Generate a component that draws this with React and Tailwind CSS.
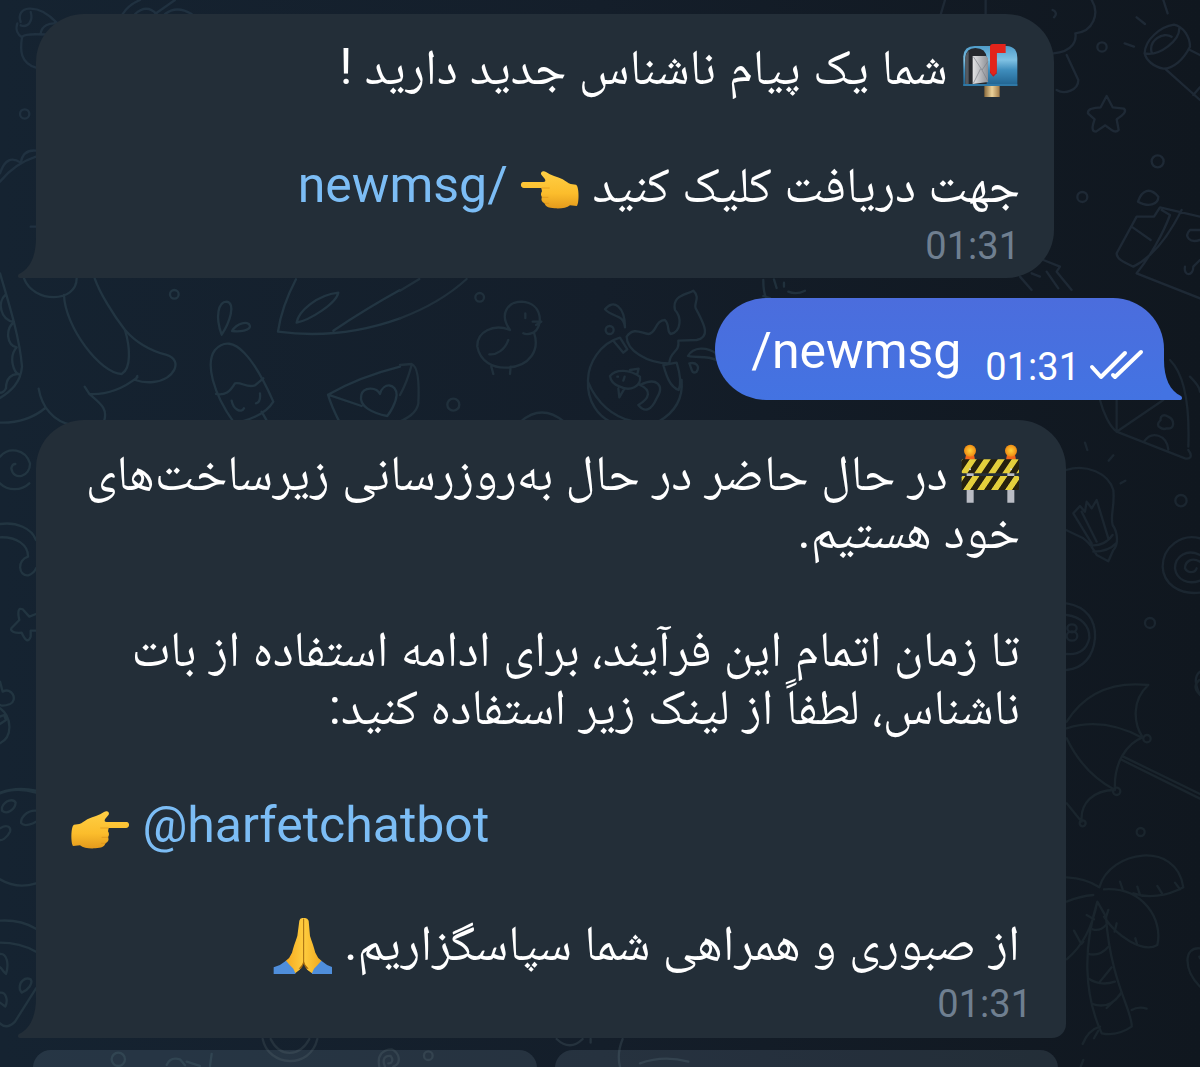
/**
 * Chat conversation view
 * Bot messages on the left, own command on the right
 */

import { clsx } from "clsx";

// Doodles drawn behind the messages, grouped by area of the wallpaper
const doodles = [
  {
    at: "translate(0 0)",
    tone: "stroke-[#203140]",
    paths: [
      "M62 66C45 20 110 5 170 68M52 70C45 90 55 105 66 112M66 112C60 150 60 190 110 204M66 112C70 98 130 104 150 104M62 76C85 85 100 60 92 36M122 100C125 80 145 65 178 72",
      "M368 42Q385 15 420 0M405 42Q440 10 470 42M465 42L525 0M495 42Q530 15 575 42",
      "M0 545Q45 490 108 470M0 520Q20 460 62 488M62 488Q70 448 108 452M92 680H108",
      "M60 342A14 14 0 1 0 88 342A14 14 0 1 0 60 342",
    ],
  },
  {
    at: "translate(0 240)",
    tone: "stroke-[#223542]",
    paths: [
      "M0 100C30 200 60 300 66 380C62 430 30 455 0 474M16 165C-8 185 0 240 42 246C15 268 20 315 50 322C25 350 40 398 58 403C35 400 18 415 18 445C10 460 0 458 0 458",
      "M72 115C100 190 230 190 230 115M192 165C195 260 300 400 365 402C395 385 390 320 375 270C340 225 300 160 284 115",
      "M375 270C410 310 450 332 500 345C550 360 525 420 460 426C440 428 420 425 406 420L412 408M412 412C370 445 325 465 268 462L254 440M268 462C300 490 325 505 312 545M116 446C125 500 160 545 215 555M0 548Q80 550 136 504",
      "M510 163A13 13 0 1 0 536 163A13 13 0 1 0 510 163",
      "M665 284C645 230 655 185 680 185C708 190 690 245 665 284ZM696 273C710 250 745 240 750 258C750 272 720 276 696 273Z",
      "M700 545C640 460 615 370 645 330C700 270 765 360 820 485C800 520 760 535 725 545M648 462C675 468 690 455 705 430C725 425 740 445 765 436L790 415M695 482C700 510 725 520 732 505M780 460C782 480 778 488 768 490M785 515L802 545",
      "M888 118Q845 200 834 275Q1020 300 1200 235M1000 272Q1100 205 1200 150M890 248C895 215 950 165 1015 158C1010 190 930 240 890 248Z",
      "M1200 380Q1080 410 984 464Q995 500 1018 545M984 464L1085 498M1162 528C1120 520 1075 500 1084 465C1090 440 1130 440 1140 462C1150 425 1190 430 1190 465C1188 490 1170 518 1162 528Z",
    ],
  },
  {
    at: "translate(400 270)",
    tone: "stroke-[#20303c]",
    paths: [
      "M0 62L58 27M0 145Q120 100 200 27M226 82A13 13 0 1 0 252 82A13 13 0 1 0 226 82M142 404A18 18 0 1 0 178 404A18 18 0 1 0 142 404",
      "M330 180C295 130 325 95 366 95C430 100 430 170 400 188C385 194 378 194 370 190M330 180C280 160 230 185 232 230C240 275 280 295 320 293C390 290 420 240 402 188M325 210C315 240 290 255 268 253M274 290L280 312M332 290L330 312M376 130V144M398 155L424 155L408 165",
      "M0 285L35 282C55 290 58 340 55 400C50 430 20 445 0 455M35 285Q20 340 0 375",
      "M362 455Q425 400 492 455M564 330C565 280 600 220 660 203L682 238L670 248L640 212M564 335C590 400 640 440 695 453M564 330C560 400 600 440 630 455M845 330C850 390 820 430 775 455M790 285L830 278C840 310 845 340 836 360C810 350 800 320 790 285",
      "M680 200C700 170 725 190 745 192C770 190 765 150 795 150C810 165 800 185 812 192C845 185 845 140 825 120C815 75 860 75 880 62C905 85 875 105 890 120C910 160 935 200 890 210L835 212C840 250 810 240 808 280C740 280 680 240 680 200Z",
      "M615 118C640 85 675 110 675 172C670 130 640 145 615 118ZM617 180A12 12 0 1 0 641 180A12 12 0 1 0 617 180",
      "M630 318C650 295 690 300 720 320C725 350 690 365 660 350C645 345 632 335 630 318M655 355L658 382L672 358M690 300L716 296L712 312M720 345C770 320 795 345 770 385C755 420 735 430 715 405C750 385 755 360 720 345M652 320H654M674 320L670 332",
      "M864 258C880 230 920 230 948 250V270C920 255 890 265 864 258ZM868 280C890 275 900 290 890 305C875 315 875 295 868 280ZM1090 30Q1090 70 1100 86M1090 78L1110 84M1122 28L1130 54M1152 38V50M1165 65Q1190 75 1215 62",
    ],
  },
  {
    at: "translate(900 0)",
    tone: "stroke-[#1e2935]",
    paths: [
      "M122 44L135 0M257 44V0M460 160C520 155 530 120 526 100C580 95 600 40 575 0M500 165L535 240C535 270 495 285 470 270M458 30C470 35 470 45 462 52",
      "M592 141A14 14 0 1 0 620 141A14 14 0 1 0 592 141M755 484A18 18 0 1 0 791 484A18 18 0 1 0 755 484M532 591A15 15 0 1 0 562 591A15 15 0 1 0 532 591",
      "M620 288L638 322L672 326C682 335 668 345 650 358L656 390C645 402 632 388 616 376L588 395C574 395 576 380 584 358L564 340C562 325 580 325 602 322Z",
      "M734 160C735 120 780 80 822 74C850 80 870 110 870 140C850 180 820 205 790 206C760 200 738 180 734 160ZM734 160C780 170 840 120 838 84M755 158C745 120 790 95 815 110M870 150L900 165M795 206L900 300M880 285L900 262M710 52L735 72M790 0L803 40M674 130L702 140",
      "M714 605C725 570 750 560 775 590C775 610 750 625 714 605ZM762 650L780 622L900 650M762 650H710L650 760C650 780 680 790 700 800M700 800C740 780 790 740 845 630M695 680L752 720M785 630L810 645C790 700 750 770 710 820L900 895M900 690H870C850 710 870 730 900 720M855 800C850 830 880 830 880 800L900 780",
      "M360 830L395 870M430 780L480 800L470 815L515 870M395 820L420 830M440 815L475 865",
    ],
  },
  {
    at: "translate(900 420)",
    tone: "stroke-[#1b2630]",
    paths: [
      "M870 -130Q900 -100 900 -85M600 -60C610 -20 630 20 650 35L855 115C870 118 880 110 865 90M650 35L790 -60M650 35V-70M732 65C755 30 800 45 805 88M782 0C760 20 790 30 800 25C825 30 825 0 805 -10C790 -20 780 -10 782 0M810 -180C850 -140 870 -60 865 80",
      "M498 150C560 130 625 160 640 210C645 260 630 285 638 315C655 340 655 375 640 390L625 424L590 405C575 380 570 370 550 355L498 330M570 375C600 380 625 365 638 345M580 395C610 395 635 385 648 370M575 370L520 280L540 258L555 275L560 245L575 265L590 240L625 355M545 275L590 365",
      "M555 68L562 90M640 106L626 122M676 182L662 190M826 242A17 17 0 1 0 860 242A17 17 0 1 0 826 242M735 609A15 15 0 1 0 765 609A15 15 0 1 0 735 609",
      "M900 355C845 340 788 380 788 440C790 490 835 525 900 518M900 405C860 385 825 410 825 445C830 480 865 495 900 482M900 425C875 410 855 425 855 445C862 460 885 460 890 445",
      "M500 550C560 560 588 600 585 655C580 710 550 745 500 750M500 585C545 590 570 620 568 655C560 690 535 705 500 702M502 625A14 12 0 1 0 530 625A14 12 0 1 0 502 625M500 648A16 14 0 1 0 532 648A16 14 0 1 0 500 648M900 755Q875 775 900 825",
    ],
  },
  {
    at: "translate(1000 680)",
    tone: "stroke-[#1a252d]",
    paths: [
      "M200 125C260 30 350 5 445 15C395 60 400 130 428 172C380 190 340 250 345 330C280 330 240 370 245 425L200 370M200 145Q310 110 428 174M200 175Q250 280 345 330M370 230L600 342M362 238L600 356",
      "M430 176A11 11 0 1 0 452 176A11 11 0 1 0 430 176M339 334A11 11 0 1 0 361 334A11 11 0 1 0 339 334M239 430A9 9 0 1 0 257 430A9 9 0 1 0 239 430M410 456A12 12 0 1 0 434 456A12 12 0 1 0 410 456M598 0Q575 20 598 42",
      "M200 592Q260 595 298 622C330 510 530 480 550 622C500 650 440 655 400 640M312 628C430 620 490 720 472 795C430 820 350 770 312 710M200 665Q240 648 280 645M200 838Q270 780 292 665M292 665C250 800 250 940 305 1060Q350 1070 395 1040C400 1000 330 900 318 710L292 665",
      "M278 748Q300 755 318 735M264 822Q300 830 325 800M264 895Q300 920 345 905M276 972Q330 990 362 940M300 905L335 862M320 984L360 945M395 990Q415 978 440 986M300 1040Q265 1050 248 1092M295 1052L282 1075M250 1140L242 1160M360 605L368 628M412 620L420 645M472 618L486 640M525 608L540 628M325 690L318 712M350 730L344 755M406 775L412 795M222 752L244 792L250 785M260 705L282 718",
      "M600 805C550 800 550 870 600 920M598 830L600 835",
    ],
  },
  {
    at: "translate(0 780)",
    tone: "stroke-[#223440]",
    paths: [
      "M0 40Q50 20 108 38M0 298Q50 328 108 310M6 82C15 60 40 55 47 68C45 90 20 105 6 92ZM108 92C80 90 60 115 64 130C75 142 100 130 108 125M0 145C20 132 34 140 30 155C20 175 5 182 0 180",
      "M0 422Q60 418 108 446M0 488Q60 488 108 515M108 625L45 725Q20 750 0 730M0 522C20 520 28 550 18 582C10 575 5 565 0 562M60 630C55 605 75 590 92 598C100 610 85 630 65 638ZM0 638C18 635 25 660 16 680L0 668",
      "M335 838A20 20 0 1 0 375 838A20 20 0 1 0 335 838M500 855Q510 830 540 838Q550 850 555 856M560 845L600 858M635 822L630 858",
    ],
  },
  {
    at: "translate(250 900)",
    tone: "stroke-[#25323d]",
    paths: [
      "M38 417C55 500 180 510 202 417M62 417C90 475 150 470 178 417M388 500C380 465 400 448 425 448C450 460 455 490 430 500M405 500C395 478 405 465 422 468C432 480 425 492 415 490M522 467A13 13 0 1 0 548 467A13 13 0 1 0 522 467",
      "M920 417Q960 455 998 417M1022 417V428M1118 417Q1100 460 1110 500M1170 490Q1240 465 1315 485",
    ],
  },
  {
    at: "translate(0 420)",
    tone: "stroke-[#223541]",
    paths: [
      "M0 110C25 80 75 85 90 130C92 170 40 185 34 145C36 135 40 132 46 132M0 190C25 215 65 212 88 190",
      "M0 312C50 305 95 325 108 360M0 352C50 350 85 375 84 410C50 420 55 470 85 466Q102 460 108 445",
      "M108 582L88 590L68 568C55 562 52 575 58 600L34 625C30 635 45 640 65 638C75 660 85 670 92 650L92 632L108 632",
      "M0 785L8 815C35 800 55 840 30 852C15 858 5 858 0 855M0 865C35 890 40 950 0 970M0 890L12 885L18 900L0 912M0 1118Q50 1100 108 1112",
    ],
  },
];

const Wallpaper = () => (
  <svg
    className="absolute inset-0 h-full w-full"
    viewBox="0 0 1200 1067"
    preserveAspectRatio="xMidYMid slice"
    fill="none"
    strokeWidth="7"
    strokeLinecap="round"
    strokeLinejoin="round"
    aria-hidden="true"
  >
    {doodles.map((area) => (
      <g key={area.at} transform={`${area.at} scale(0.3333)`} className={area.tone}>
        {area.paths.map((d) => (
          <path key={d} d={d} />
        ))}
      </g>
    ))}
  </svg>
);

const Tail = ({ className }) => (
  <svg className={clsx("absolute bottom-0 h-10 w-5", className)} viewBox="0 0 20 40" aria-hidden="true">
    <path d="M20 0H18C18 18 12 31 1 36C-1 38 0 40 3 40H20Z" />
  </svg>
);

// Emoji are drawn on a 180 unit grid and sit in the line like a glyph
const Emoji = ({ label, className, children }) => (
  <svg
    className={clsx("-mt-4 -mb-1 inline-block size-[60px] align-[-10px]", className)}
    viewBox="0 0 180 180"
    role="img"
    aria-label={label}
  >
    {children}
  </svg>
);

const Mailbox = () => (
  <Emoji label="Open mailbox with raised flag">
    <defs>
      <linearGradient id="box" x2="0" y2="1">
        <stop offset="0" stopColor="#4f9dca" />
        <stop offset="0.35" stopColor="#7fc1e3" />
        <stop offset="0.6" stopColor="#3f8dbc" />
        <stop offset="1" stopColor="#1f618e" />
      </linearGradient>
      <linearGradient id="post">
        <stop offset="0" stopColor="#8a6a3c" />
        <stop offset="0.5" stopColor="#ecd29a" />
        <stop offset="1" stopColor="#a07a48" />
      </linearGradient>
      <linearGradient id="letter">
        <stop offset="0" stopColor="#e4e4e6" />
        <stop offset="1" stopColor="#8d9096" />
      </linearGradient>
    </defs>
    <path fill="url(#post)" d="M73 142H119V177H73Z" />
    <path fill="url(#box)" d="M10 144V55Q12 24 44 24H140Q172 26 172 60V144Z" />
    <path fill="#25282d" d="M16 138V60Q18 30 46 30Q78 30 80 60V138Z" />
    <path fill="#55595f" d="M16 138V62Q18 44 26 40V138Z" />
    <path fill="url(#letter)" d="M38 54H78L84 60V132L38 138Z" />
    <path fill="none" stroke="#7c7f86" strokeWidth="2" d="M40 56L66 96L84 70M40 136L62 92M84 130L66 96" />
    <path fill="#2f78a6" d="M10 138H172V144H10Z" />
    <path fill="#c11a1a" d="M90 30H110V106L100 116L90 104Z" />
    <path fill="#e3241b" d="M90 24Q92 18 98 18H137V45H110V98Q106 112 98 110Q92 106 90 98Z" />
  </Emoji>
);

const Barrier = () => (
  <Emoji label="Construction">
    <defs>
      <pattern id="stripes" width="42" height="50" patternUnits="userSpaceOnUse" patternTransform="translate(8 46) skewX(-34)">
        <rect width="42" height="50" fill="#e4cf3c" />
        <rect width="21" height="50" fill="#26210f" />
      </pattern>
      <radialGradient id="lamp">
        <stop offset="0" stopColor="#ffd23a" />
        <stop offset="1" stopColor="#ef8a12" />
      </radialGradient>
    </defs>
    <path fill="#b9bcc4" d="M20 86H41V176H20ZM142 86H163V176H142Z" />
    <path fill="#f2661c" d="M18 32H42L45 47H15ZM141 32H165L168 47H138Z" />
    <circle cx="30" cy="20" r="18" fill="url(#lamp)" />
    <circle cx="153" cy="20" r="18" fill="url(#lamp)" />
    <rect x="5" y="46" width="172" height="42" rx="4" fill="url(#stripes)" />
    <rect x="5" y="96" width="172" height="42" rx="4" fill="url(#stripes)" />
    <circle cx="30" cy="76" r="3" fill="#d7d7d7" />
    <circle cx="153" cy="76" r="3" fill="#d7d7d7" />
  </Emoji>
);

const PointingHand = ({ label, className }) => (
  <Emoji label={label} className={className}>
    <defs>
      <linearGradient id="hand" x2="0" y2="1">
        <stop offset="0" stopColor="#ffcf45" />
        <stop offset="0.6" stopColor="#fbbd2c" />
        <stop offset="1" stopColor="#e39a1c" />
      </linearGradient>
    </defs>
    <path
      fill="url(#hand)"
      d="M10 78H70C76 78 78 74 74 68L64 56C60 48 70 42 78 48C92 58 112 62 128 70C138 76 144 82 152 84L168 86C178 90 178 146 170 150L150 148C140 156 124 158 104 157C86 156 76 152 74 142C66 138 62 132 66 124C62 118 62 112 66 106L64 96H12C0 96 0 79 10 78Z"
    />
    <path fill="none" stroke="#d9911a" strokeWidth="2" d="M66 96H88M66 124H84M74 142H86" strokeLinecap="round" />
  </Emoji>
);

const FoldedHands = () => (
  <Emoji label="Folded hands">
    <defs>
      <linearGradient id="palm">
        <stop offset="0" stopColor="#f5a91f" />
        <stop offset="0.5" stopColor="#ffcd3f" />
        <stop offset="1" stopColor="#f0a81f" />
      </linearGradient>
    </defs>
    <path
      fill="url(#palm)"
      d="M94 12Q84 10 82 20L76 66C70 84 64 100 60 116Q54 132 40 142L62 180Q84 172 94 152Q104 172 128 180L150 142Q136 132 130 116C126 100 120 84 114 66L110 20Q106 10 96 12Z"
    />
    <path fill="none" stroke="#a2690f" strokeWidth="3" d="M95 14V150" />
    <path fill="#a2690f" d="M95 140L100 152L110 164H80L90 152Z" />
    <path fill="#232e38" d="M95 150Q104 172 122 183H68Q86 172 95 150Z" />
    <path fill="#4f8edb" d="M5 160Q26 154 42 140Q52 152 64 164Q68 172 72 183H5ZM182 160Q164 154 148 140Q138 152 126 164Q122 172 118 183H182Z" />
  </Emoji>
);

const Incoming = ({ className, children }) => (
  <article className={clsx("relative ml-9 rounded-t-[48px] bg-[#232e38] pt-6 pr-[34px] pl-[34px]", className)}>
    <Tail className="-left-[18px] fill-[#232e38]" />
    {children}
  </article>
);

const Time = ({ className }) => (
  <time className={clsx("block text-[38px] leading-10", className)} dateTime="01:31">
    01:31
  </time>
);

const DoubleCheck = () => (
  <svg
    className="h-8 w-14"
    viewBox="0 0 56 32"
    fill="none"
    stroke="white"
    strokeWidth="4"
    strokeLinecap="round"
    strokeLinejoin="round"
    role="img"
    aria-label="Read"
  >
    <path d="M4 18L13 28L37 4M25 26L27 28L53 3" />
  </svg>
);

export default function App() {
  return (
    <main className="relative h-screen overflow-hidden bg-linear-to-r from-[#152331] via-[#141e2a] to-[#10171f] font-[Roboto,'Noto_Naskh_Arabic','Noto_Sans_Arabic',sans-serif] text-[50px] leading-[58px] text-white">
      <Wallpaper />

      <div className="relative flex flex-col pt-[14px]">
        {/* New message notice */}
        <Incoming className="mr-[146px] rounded-br-[48px] pb-3">
          <div dir="rtl" className="space-y-[60px]">
            <p>
              <Mailbox /> شما یک پیام ناشناس جدید دارید !
            </p>
            <p>
              جهت دریافت کلیک کنید <PointingHand label="Pointing left" />{" "}
              <a href="#newmsg" className="text-[#7cbdf5]">/newmsg</a>
            </p>
          </div>
          <Time className="mt-3 text-right text-[#6f7f90]" />
        </Incoming>

        {/* Own command */}
        <article className="relative mt-5 mr-9 flex h-[102px] items-center self-end rounded-l-[51px] rounded-tr-[51px] bg-linear-to-b from-[#4b6ddd] to-[#4373e2] pt-1 pr-5 pl-9">
          <Tail className="-right-[18px] -scale-x-100 fill-[#4373e2]" />
          <a href="#newmsg">/newmsg</a>
          <Time className="mt-8 ml-6" />
          <div className="mt-7 ml-2">
            <DoubleCheck />
          </div>
        </article>

        {/* Maintenance notice */}
        <Incoming className="mt-5 mr-[134px] rounded-br-[14px] pb-[14px]">
          <div dir="rtl" className="space-y-[60px] pr-3">
            <p>
              <Barrier /> در حال حاضر در حال به‌روزرسانی زیرساخت‌های خود هستیم.
            </p>
            <p>تا زمان اتمام این فرآیند، برای ادامه استفاده از بات ناشناس، لطفاً از لینک زیر استفاده کنید:</p>
            <p dir="ltr">
              <PointingHand label="Pointing right" className="-scale-x-100" />{" "}
              <a href="#harfetchatbot" className="text-[#7cbdf5]">@harfetchatbot</a>
            </p>
            <p>
              از صبوری و همراهی شما سپاسگزاریم. <FoldedHands />
            </p>
          </div>
          <Time className="mt-3 text-right text-[#6f7f90]" />
        </Incoming>

        {/* Inline keyboard, continues below the fold */}
        <div className="mt-3 mr-[142px] ml-[33px] grid grid-cols-2 gap-[18px]">
          <button type="button" aria-label="Option 1" className="h-24 rounded-[18px] bg-[#8fa6bd]/15" />
          <button type="button" aria-label="Option 2" className="h-24 rounded-[18px] bg-[#8fa6bd]/15" />
        </div>
      </div>
    </main>
  );
}
